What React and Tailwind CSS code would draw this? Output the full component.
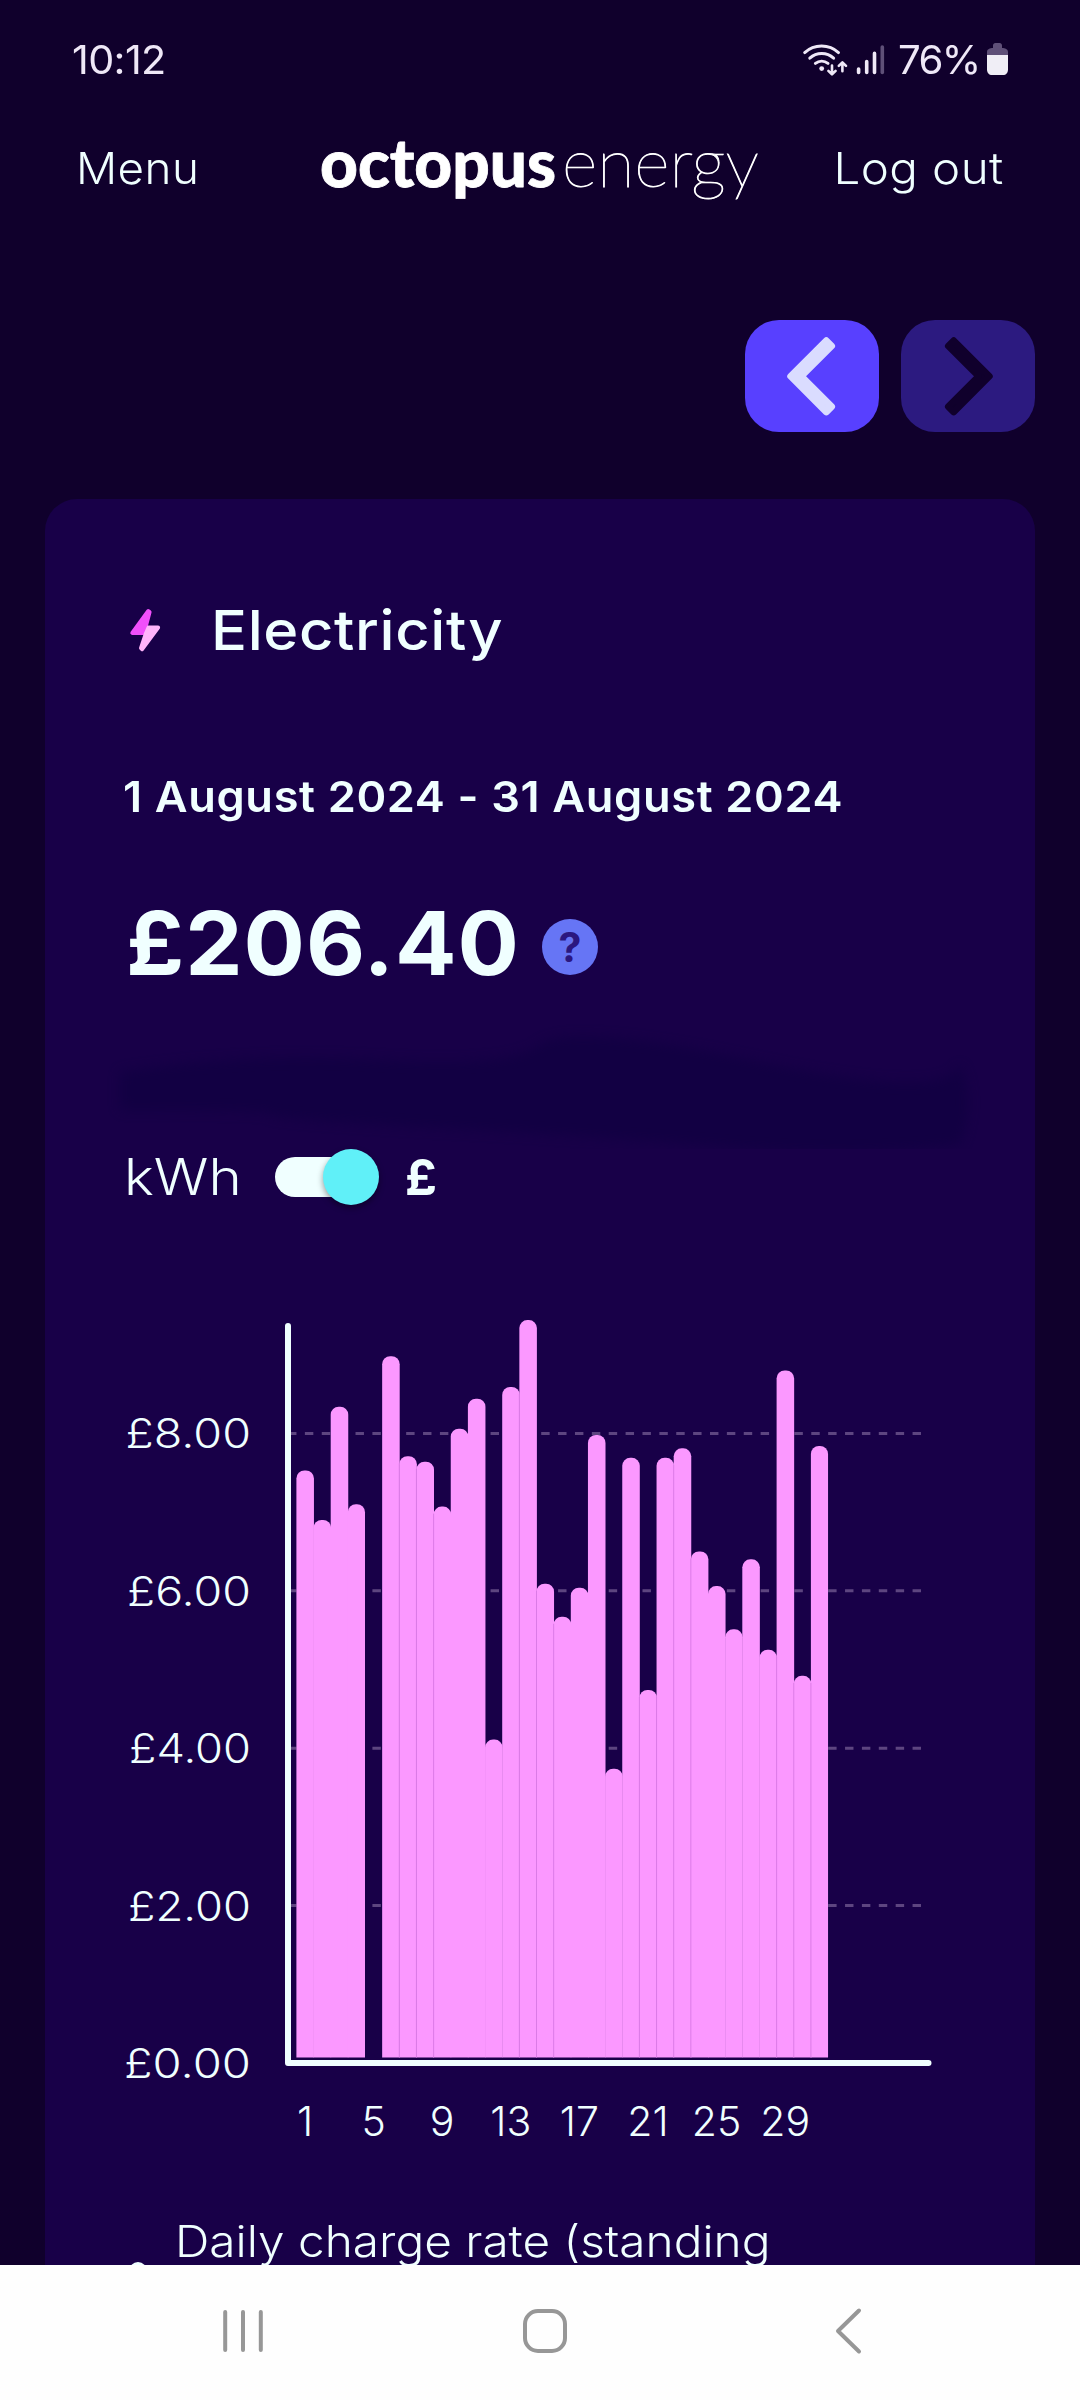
import { useState } from 'react'

// Daily cost in pounds, index 0 is the 1st of the month
const costs = [
  7.53, 6.9, 8.34, 7.1, 0, 8.98, 7.71, 7.64, 7.07, 8.06, 8.44, 4.11, 8.59, 9.44, 6.09, 5.67,
  6.04, 7.98, 3.74, 7.69, 4.74, 7.69, 7.81, 6.5, 6.06, 5.51, 6.4, 5.25, 8.8, 4.92, 7.84,
]

const yTicks = [
  { value: 8, x: 128.5 },
  { value: 6, x: 130 },
  { value: 4, x: 132 },
  { value: 2, x: 131 },
  { value: 0, x: 127 },
]

const xTicks = [1, 5, 9, 13, 17, 21, 25, 29]
const seams = [6, 7, 8, 13, 14, 15, 20, 21, 22, 23, 28, 29, 30]

const BASE = 2063
const BAR_BOTTOM = 2057.5
const BAR_START = 296.4
const BAR_WIDTH = 17.15

const yFor = (value) => BASE - value * 78.7

function StatusBar() {
  return (
    <div className="h-[118px] shrink-0 flex items-center justify-between pl-[72px] pr-[72px] text-[#efe8f7]">
      <span className="text-[39px] leading-none tracking-[-0.6px] origin-left scale-x-[1.06]">10:12</span>
      <div className="flex items-center">
        <svg className="w-[96px] h-[40px]" viewBox="800 39 96 40" fill="none" stroke="#efe8f7" strokeLinecap="round">
          <path d="M804.7 52.6c9.5-8.8 24.3-8.8 33.8 0" strokeWidth="3" />
          <path d="M809.8 58.2c6.8-6.2 17-6.2 23.8 0" strokeWidth="3" />
          <path d="M815.4 63.4c3.8-3 8.8-3 12.6 0" strokeWidth="3" />
          <circle cx="821.7" cy="68.6" r="2.4" fill="#efe8f7" stroke="none" />
          <path d="M832 65.5v8.5m-3.6-3.2 3.6 3.6 3.6-3.6" strokeWidth="2.6" strokeLinejoin="round" />
          <path d="M842.4 71.2v-8.5m-3.6 3.2 3.6-3.6 3.6 3.6" strokeWidth="2.6" strokeLinejoin="round" />
          <path d="M858.6 69v3.4M866.7 61.5v10.9M874.5 53.4v19" strokeWidth="3.6" />
          <path d="M882.3 47v25.4" strokeWidth="3.6" stroke="#5f5078" />
        </svg>
        <span className="ml-[2px] w-[82px] text-[39px] leading-none tracking-[-1.6px] origin-left scale-x-[1.03]">76%</span>
        <svg className="ml-[7px] w-[21px] h-[32px]" viewBox="0 0 21 32">
          <path d="M6 5V2.4C6 1 7 0 8.4 0h4.2C14 0 15 1 15 2.4V5c3 0 6 1 6 4v3H0V9c0-3 3-4 6-4z" fill="#5f5078" />
          <path d="M0 12h21v14.500c0 3.500-2 5.500-5 5.500H5c-3 0-5-2-5-5.500z" fill="#f0eef6" />
        </svg>
      </div>
    </div>
  )
}

function Logo() {
  return (
    <svg className="w-[442px] h-[100px] ml-[120px] overflow-visible" viewBox="319 118 442 100" fill="#fff" stroke="#fff">
      <text x="320" y="187" fontFamily="Lato" fontWeight="900" fontSize="66" strokeWidth="0.8" strokeLinejoin="round" textLength="236" lengthAdjust="spacingAndGlyphs">
        octopus
      </text>
      <text x="562" y="187" fontFamily="Lato" fontWeight="100" fontSize="69" strokeWidth="0.9" textLength="197" lengthAdjust="spacingAndGlyphs">
        energy
      </text>
    </svg>
  )
}

function Header() {
  return (
    <header className="h-[100px] shrink-0 flex items-center pl-[76px] pr-[76px] text-[#f0ffff] font-[340]">
      <button type="button" className="w-[123px] text-left text-[44px] leading-none tracking-[0.4px] origin-left scale-x-[1.04]">Menu</button>
      <Logo />
      <button type="button" className="ml-auto whitespace-nowrap text-[44px] leading-none tracking-[0.4px] origin-right scale-x-[1.08]">Log out</button>
    </header>
  )
}

function Chevron({ color, flip }) {
  return (
    <svg className={`w-[134px] h-[112px] ${flip ? '-scale-x-100' : ''}`} viewBox="745 320 134 112">
      <path
        d="M790.500 376.300 826.300 340.500 831.800 346 801.500 376.300 831.800 406.600 826.300 412.100z"
        fill={color}
        stroke={color}
        strokeWidth="6.5"
        strokeLinejoin="round"
      />
    </svg>
  )
}

function CostChart() {
  return (
    <svg className="block w-[990px] h-[860px]" viewBox="45 1300 990 860" fontFamily="Inter, sans-serif" fontWeight="270" fontSize="41" fill="#f0ffff">
      {yTicks.map(({ value, x }) => (
        <g key={value}>
          {value > 0 && (
            <line x1="288" x2="921" y1={yFor(value)} y2={yFor(value)} stroke="#5d4580" strokeWidth="3" strokeDasharray="8.44 8.44" />
          )}
          <text x={x - 3} y={yFor(value) + 15} textLength={254 - x} lengthAdjust="spacingAndGlyphs">£{value}.00</text>
        </g>
      ))}

      {costs.map((cost, i) => {
        if (!cost) return null
        const x = BAR_START + i * BAR_WIDTH
        // slight overlap so that neighbours join without a gap
        const right = x + BAR_WIDTH + (costs[i + 1] ? 0.4 : 0)
        const top = yFor(cost)
        return (
          <path
            key={i}
            d={`M${x} ${BAR_BOTTOM}V${top + 8}a8 8 0 0 1 8 -8H${right - 8}a8 8 0 0 1 8 8V${BAR_BOTTOM}z`}
            fill="#fb98ff"
          />
        )
      })}

      {/* hairlines where neighbouring bars meet */}
      {seams.map((day) => {
        const x = BAR_START + day * BAR_WIDTH
        const top = yFor(Math.min(costs[day - 1], costs[day])) + 7
        return <line key={day} x1={x} x2={x} y1={top} y2={BAR_BOTTOM} stroke="#d878e4" strokeWidth="0.9" />
      })}

      <path d="M288 1326V2063H928.500" fill="none" stroke="#f0ffff" strokeWidth="6" strokeLinecap="round" strokeLinejoin="round" />

      {xTicks.map((day) => (
        <text key={day} x={BAR_START + (day - 0.5) * BAR_WIDTH} y="2136" textAnchor="middle">{day}</text>
      ))}
    </svg>
  )
}

function ElectricityCard() {
  const [showCost, setShowCost] = useState(true)

  return (
    <section className="mt-[67px] mx-[45px] flex-1 min-h-0 overflow-hidden rounded-t-[32px] bg-[#180048] text-[#f0ffff]">
      <div className="mt-[101px] h-[60px] pl-[84px] flex items-center">
        <svg className="w-[32px] h-[44px]" viewBox="129 609 32 44" strokeWidth="4" strokeLinejoin="round">
          <path d="M148.300 612 132.300 634h10.600l3.400-8.500 3.300-12.500z" fill="#f04ffa" stroke="#f04ffa" />
          <path d="M148.500 628.500h9.600L142 650.200l-1-1 4.500-13.700z" fill="#ffb4fb" stroke="#ffb4fb" />
        </svg>
        <h2 className="ml-[50px] text-[55px] leading-none font-[550] tracking-[0.6px] origin-left scale-x-[1.085]">Electricity</h2>
      </div>

      <p className="mt-[111px] pl-[78px] h-[50px] leading-[50px] text-[43px] font-semibold whitespace-nowrap">
        <span className="inline-block origin-left scale-x-[1.05] tracking-[0.6px]">1 August 2024 - 31 August 2024</span>
      </p>

      <div className="mt-[82px] h-[80px] pl-[81px] flex items-center">
        <span className="w-[416px] text-[88px] leading-none font-bold tracking-[1px] origin-left scale-x-[1.035]">£206.40</span>
        <span className="mt-[8px] w-[56px] h-[56px] rounded-full bg-[#6675f5] flex items-center justify-center text-[#2b1780] text-[41px] leading-none font-bold">?</span>
      </div>

      <svg className="block w-[990px] h-[166px]" viewBox="45 983 990 166">
        <path
          d="M120 1072Q250 1052 380 1060T540 1045 760 1062 960 1064Q976 1100 960 1144 860 1158 740 1148T440 1128 270 1114 120 1110z"
          fill="#110042"
          className="opacity-80 blur-[6px]"
        />
      </svg>

      <div className="h-[56px] pl-[79px] flex items-center text-[50px] leading-none">
        <span className="w-[151px] font-light origin-left scale-x-[1.13]">kWh</span>
        <button type="button" onClick={() => setShowCost(!showCost)} className="w-[104px] h-[56px] flex items-center">
          <span className={`w-[96px] h-[40px] rounded-full bg-[#f0ffff] flex items-center ${showCost ? 'justify-end' : 'justify-start'}`}>
            <span className="-mr-[8px] w-[56px] h-[56px] shrink-0 rounded-full bg-[#60f0f8] shadow-[0_3px_6px_rgba(0,0,0,0.4)]" />
          </span>
        </button>
        <span className="ml-[26px] font-bold">£</span>
      </div>

      <div className="mt-[95px]">
        <CostChart />
      </div>

      <div className="mt-[56px] pl-[84px] flex">
        <span className="mt-[46px] w-[18px] h-[18px] rounded-full bg-[#f0ffff]" />
        <p className="ml-[28px] h-[50px] leading-[50px] text-[44px] font-[340] whitespace-nowrap origin-left scale-x-[1.085]">Daily charge rate (standing</p>
      </div>
    </section>
  )
}

function NavBar() {
  return (
    <nav className="h-[135px] shrink-0 bg-[#fefefe]">
      <svg className="block w-full h-full" viewBox="0 2265 1080 135" fill="none" stroke="#979797" strokeWidth="4" strokeLinecap="round">
        <path d="M225.200 2312v38M243 2312v38M260.800 2312v38" />
        <rect x="525" y="2311" width="40" height="40" rx="13" />
        <path d="M859 2310.500 838 2331l21 20.500" strokeLinejoin="round" />
      </svg>
    </nav>
  )
}

export default function App() {
  return (
    <div className="w-[1080px] h-[2400px] overflow-hidden flex flex-col bg-[#10002c] font-['Inter',sans-serif]">
      <StatusBar />
      <Header />
      <div className="mt-[102px] pr-[45px] flex justify-end gap-[22px]">
        <button type="button" className="rounded-[34px] bg-[#5840ff]">
          <Chevron color="#dadcff" />
        </button>
        <button type="button" disabled className="rounded-[34px] bg-[#2c1a80]">
          <Chevron color="#10002c" flip />
        </button>
      </div>
      <ElectricityCard />
      <NavBar />
    </div>
  )
}
